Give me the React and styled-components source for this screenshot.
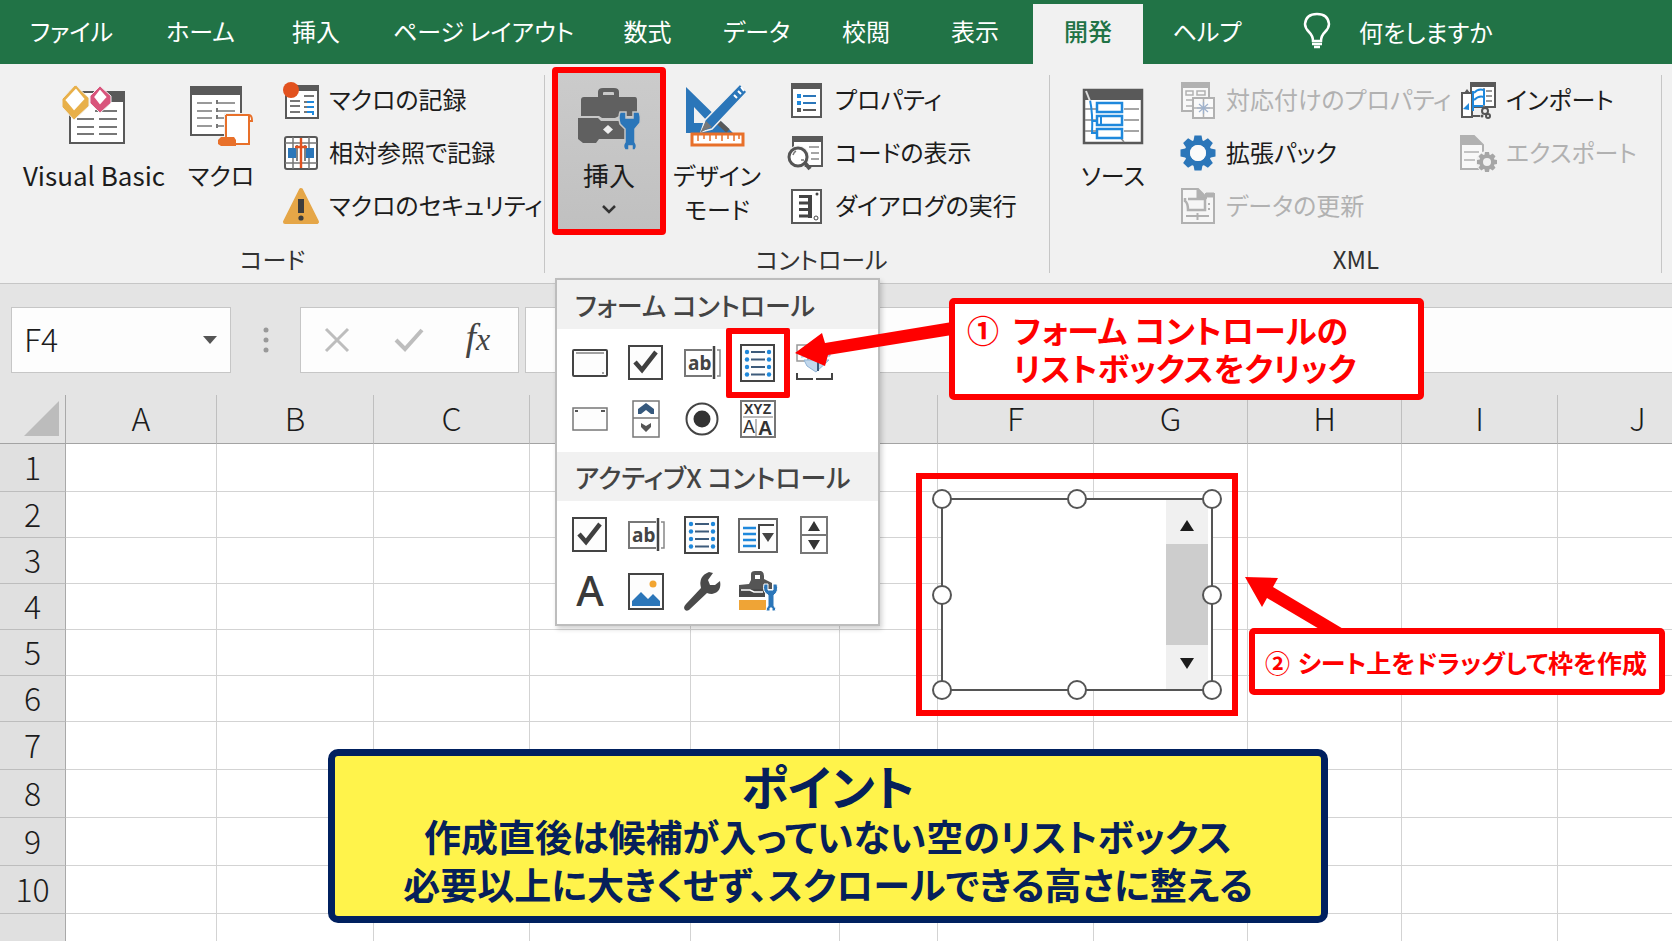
import React from 'react'
import styled, { createGlobalStyle } from 'styled-components'

const color = {
    green: '#217346',
    ribbon: '#f1f1f1',
    bar: '#e4e4e4',
    line: '#c6c6c6',
    ink: '#1c1c1c',
    grey: '#595959',
    faded: '#b1b1b1',
    blue: '#2b76b9',
    bright: '#1e88dc',
    orange: '#e8702a',
    red: '#ff0000',
    navy: '#00205f',
}

const tabs = [
    { name: 'ファイル', width: 135 },
    { name: 'ホーム', width: 123 },
    { name: '挿入', width: 108 },
    { name: 'ページ レイアウト', width: 227 },
    { name: '数式', width: 101 },
    { name: 'データ', width: 117 },
    { name: '校閲', width: 102 },
    { name: '表示', width: 116 },
    { name: '開発', width: 110, active: true },
    { name: 'ヘルプ', width: 128 },
]

const columns = [
    ['A', 151], ['B', 157], ['C', 156], ['D', 161], ['E', 149], ['', 98],
    ['F', 156], ['G', 154], ['H', 154], ['I', 156], ['J', 160],
]

const rows = [48, 46, 46, 46, 46, 46, 48, 48, 48, 48, 48]

/* ---------- icons ---------- */

const Gear = ({ x, y, r, hole, fill }) => (
    <g fill={fill} transform={`translate(${x} ${y})`}>
        {[0, 45, 90, 135, 180, 225, 270, 315].map(a => (
            <path key={a} transform={`rotate(${a})`} d={`M${-r * 0.2} ${-r}H${r * 0.2}L${r * 0.28} ${-r * 0.6}H${-r * 0.28}Z`} />
        ))}
        <circle r={(r * 0.76 + hole) / 2} fill="none" stroke={fill} strokeWidth={r * 0.76 - hole} />
    </g>
)

const VisualBasicIcon = () => (
    <svg width="66" height="62" viewBox="0 0 66 62" aria-hidden="true">
        <path d="M9 8H63V59H9Z" fill="#fff" stroke={color.grey} strokeWidth="2" />
        <path d="M46 7H64V18H46Z" fill={color.grey} />
        <path d="M34 27H56M16 35H33M38 35H56M16 43H33M38 43H56M16 50H33M38 50H56" stroke="#777" strokeWidth="2" />
        <path d="M14 1L28 14V22L13 36L1 23V15Z" fill="#e8b04a" stroke="#f1f1f1" strokeWidth="1" />
        <path d="M15 3L25 15L13 28L3 16Z" fill="#fff" stroke="#e8b04a" strokeWidth="2" />
        <path d="M39 2L50 12V19L39 29L29 19V12Z" fill="#d9557c" stroke="#f1f1f1" strokeWidth="1" />
        <path d="M39 4L47 13L39 22L32 13Z" fill="#fff" stroke="#d9557c" strokeWidth="2" />
    </svg>
)

const MacroIcon = () => (
    <svg width="64" height="66" viewBox="0 0 64 66" aria-hidden="true">
        <path d="M2 5H52V53H2Z" fill="#fff" stroke={color.grey} strokeWidth="2" />
        <path d="M1 4H53V13H1Z" fill={color.grey} />
        <path d="M8 21H23M28 21H46M8 29H23M28 29H46M8 36H23M28 36H36M8 44H23M28 44H36" stroke="#999" strokeWidth="2" />
        <path d="M28 18V22M28 26V30M28 33V37M28 42V46" stroke="#777" strokeWidth="2" />
        <path d="M37 33H58V62H37Z" fill="#fff" stroke="#f1f1f1" strokeWidth="4" />
        <path d="M37 33H60Q63 33 63 39H60V37M60 33V62H37V33" fill="#fff" stroke={color.orange} strokeWidth="2" />
        <path d="M32 55H45L47 58V64H32L29 62V58Z" fill={color.orange} />
    </svg>
)

const RecordIcon = () => (
    <svg width="36" height="38" viewBox="0 0 36 38" aria-hidden="true">
        <path d="M3 5H35V37H3Z" fill="#fff" stroke={color.grey} strokeWidth="2" />
        <path d="M14 4H36V10H14Z" fill={color.grey} />
        <path d="M7 20H17M21 15H31M7 25H17M7 31H17M21 21H24M21 26H24M21 31H24" stroke="#777" strokeWidth="2" />
        <path d="M24 21H31M24 26H31M24 31H30V34" fill="none" stroke={color.bright} strokeWidth="2" />
        <circle cx="8" cy="9" r="8" fill="#e2521f" />
    </svg>
)

const RelativeIcon = () => (
    <svg width="36" height="36" viewBox="0 0 36 36" aria-hidden="true">
        <rect x="2" y="2" width="32" height="32" rx="2" fill="#fff" stroke={color.grey} strokeWidth="2" />
        <path d="M10 2V34M26 2V34M2 8H34M2 28H34" stroke="#777" strokeWidth="1.5" />
        <path d="M5 13H13V23H5ZM23 13H31V23H23Z" fill={color.blue} />
        <path d="M14 10V26M22 10V26" stroke={color.grey} strokeWidth="1.5" />
        <path d="M18 3V33M12 12H24" stroke="#e2521f" strokeWidth="2.4" />
    </svg>
)

const WarningIcon = () => (
    <svg width="36" height="38" viewBox="0 0 36 38" aria-hidden="true">
        <path d="M18 3L34 35H2Z" fill="#e5a647" stroke="#e5a647" strokeWidth="4" strokeLinejoin="round" />
        <path d="M15 12H21V26H15Z" fill="#3c3c3c" />
        <circle cx="18" cy="31" r="2.6" fill="#3c3c3c" />
    </svg>
)

const ToolboxIcon = () => (
    <svg width="64" height="70" viewBox="0 -6 64 70" aria-hidden="true">
        <path fillRule="evenodd" d="M21 11V6Q21 2 26 2H37Q42 2 42 6V11H58Q60 11 60 14V30H42L38 32H25L22 30H4V14Q4 11 7 11ZM26 7V9H37V7Q37 6 36 6H27Q26 6 26 7Z" fill="#606060" />
        <path d="M1 32H21L24 35H48V53H22L19 57H6L1 53Z" fill="#606060" />
        <path d="M31 39L36 43.500L31 48L26 43.500Z" fill="#eee" />
        <path d="M43 26H49V32H56V26H62Q64 30 63 37L58 43V56Q61 60 58 64H55V60H52V64H48Q45 60 48 56V43L43 38Q41 31 43 26Z" fill={color.blue} stroke="#c6c6c6" strokeWidth="1.5" />
    </svg>
)

const DesignIcon = () => (
    <svg width="64" height="64" viewBox="0 0 64 64" aria-hidden="true">
        <path fillRule="evenodd" d="M1 4L48 50H1ZM9 24V40H24Z" fill={color.blue} />
        <path d="M30 36L43 48" stroke={color.grey} strokeWidth="5" />
        <path d="M55 1L62 9L27 46L16 49L20 37Z" fill={color.blue} stroke="#f1f1f1" strokeWidth="1.500" />
        <path d="M21 38L27 44L20 47L15 50Z" fill="#777" />
        <path d="M49 12L52 15M53 8L56 11M56 4L59 8" stroke="#fff" strokeWidth="2" />
        <path d="M7 51H58V62H7Z" fill="#fff" stroke={color.orange} strokeWidth="3" />
        <path d="M13 52V58M19 52V56M25 52V58M31 52V56M37 52V58M43 52V56M49 52V58M54 52V56" stroke={color.orange} strokeWidth="1.500" />
    </svg>
)

const PropertiesIcon = () => (
    <svg width="36" height="38" viewBox="0 0 36 38" aria-hidden="true">
        <path d="M3 3H32V36H3Z" fill="#fff" stroke={color.grey} strokeWidth="2" />
        <path d="M2 2H33V8H2Z" fill={color.grey} />
        <path d="M8 13H12V17H8ZM8 20H12V24H8Z" fill={color.bright} />
        <path d="M8 27H12V31H8Z" fill={color.grey} />
        <path d="M14 15H27M14 22H27" stroke={color.blue} strokeWidth="2" />
        <path d="M14 29H27" stroke={color.grey} strokeWidth="2" />
    </svg>
)

const CodeIcon = () => (
    <svg width="36" height="36" viewBox="0 0 36 36" aria-hidden="true">
        <path d="M4 2H33V31H4Z" fill="#fff" stroke={color.grey} strokeWidth="2" />
        <path d="M3 1H34V7H3Z" fill={color.grey} />
        <path d="M20 12H30M22 18H30M22 24H30" stroke="#888" strokeWidth="1.500" />
        <circle cx="9" cy="22" r="11.500" fill="#f1f1f1" />
        <circle cx="9" cy="22" r="9" fill="#fff" stroke="#555" strokeWidth="3" />
        <path d="M16 28L21 34" stroke="#555" strokeWidth="4" />
        <path d="M4 20Q5 17 7 16M12 25H15" fill="none" stroke="#777" strokeWidth="1.500" />
    </svg>
)

const DialogIcon = () => (
    <svg width="36" height="38" viewBox="0 0 36 38" aria-hidden="true">
        <path d="M3 3H32V36H3Z" fill="#fff" stroke={color.grey} strokeWidth="2" />
        <path d="M10 9.500H21M10 16H21M10 22.500H21M10 29H21" fill="none" stroke="#444" strokeWidth="3" />
        <path d="M21 8V31" stroke="#444" strokeWidth="4" />
        <circle cx="28" cy="7" r="1.500" fill="#444" />
        <circle cx="27" cy="31" r="2" fill="none" stroke="#444" />
    </svg>
)

const SourceIcon = () => (
    <svg width="62" height="60" viewBox="0 0 62 60" aria-hidden="true">
        <path d="M2 5H60V58H2Z" fill="#fff" stroke={color.grey} strokeWidth="2.500" />
        <path d="M1 4H61V15H1Z" fill={color.grey} />
        <path d="M3 24H14M3 35H14M3 46H14M42 24H57M42 35H57M42 46H57M38 52L42 57" stroke="#888" strokeWidth="1.500" />
        <path d="M15 18H40V27H15ZM15 31H40V40H15ZM15 44H40V53H15Z" fill="#fff" stroke={color.bright} strokeWidth="2.500" />
        <path d="M8 15Q11 29 10 48H14M10 36H14M19 32V39" fill="none" stroke={color.bright} strokeWidth="2" />
        <path d="M4 6L8 16" stroke="#ddd" strokeWidth="2" />
    </svg>
)

const MapIcon = () => (
    <svg width="36" height="38" viewBox="0 0 36 38" aria-hidden="true">
        <path d="M2 2H29V30H2Z" fill="#f8f8f8" stroke={color.faded} strokeWidth="2" />
        <path d="M1 1H30V7H1Z" fill={color.faded} />
        <path d="M6 10H13V14H6ZM17 10H25V14H17ZM6 19H12M6 25H12" fill="none" stroke={color.faded} strokeWidth="1.500" />
        <path d="M13 17H34V37H13Z" fill="#fafafa" stroke={color.faded} strokeWidth="2" />
        <path d="M23.500 17V37M13 27H34" stroke={color.faded} strokeWidth="1.500" />
        <path d="M19 23L28 31M28 23L19 31M17 27H30M23.500 21V33" stroke="#9fb2cd" strokeWidth="1.200" />
    </svg>
)

const PackIcon = () => (
    <svg width="36" height="36" viewBox="0 0 36 36" aria-hidden="true">
        <Gear x={18} y={18} r={17.5} hole={8} fill={color.blue} />
        <circle cx="18" cy="18" r="8" fill="#fafafa" />
    </svg>
)

const RefreshIcon = () => (
    <svg width="36" height="38" viewBox="0 0 36 38" aria-hidden="true">
        <path d="M2 2H18L26 10V7H34V36H2Z" fill="#f6f6f6" stroke={color.faded} strokeWidth="2" />
        <path d="M17 2L26 11H17ZM26 6H34V10H26Z" fill={color.faded} stroke={color.faded} />
        <path d="M5 11V14Q8 16 8 23H25V12H8" fill="none" stroke={color.faded} strokeWidth="2.500" />
        <path d="M6 29H29M17.500 26V33M29 16V18M29 21V23" stroke={color.faded} strokeWidth="2" />
    </svg>
)

const ImportIcon = () => (
    <svg width="36" height="38" viewBox="0 0 36 38" aria-hidden="true">
        <path d="M11 3H35V26H11Z" fill="#fff" stroke={color.grey} strokeWidth="2" />
        <path d="M10 1H36V6H10Z" fill={color.grey} />
        <path d="M26 10H32M26 15H32M26 20H32M24 7V26" stroke="#777" strokeWidth="1.500" />
        <path d="M2 12H12V36H2Z" fill="#fff" stroke={color.grey} strokeWidth="2" />
        <path d="M4 12L7 8L10 12Z" fill={color.grey} />
        <path d="M12 35H20" fill="none" stroke={color.grey} strokeWidth="2" />
        <path d="M14 12Q18 7 24 9V24M14 19Q19 14 24 16M14 25H23M13 10V30" fill="none" stroke={color.bright} strokeWidth="2" />
        <path d="M3 28L9 22V29Z" fill={color.bright} />
        <circle cx="25" cy="30" r="3" fill="none" stroke="#555" strokeWidth="2" />
        <circle cx="28" cy="35" r="2" fill="none" stroke="#555" strokeWidth="2" />
        <circle cx="22" cy="35" r="1.500" fill="#555" />
    </svg>
)

const ExportIcon = () => (
    <svg width="38" height="38" viewBox="0 0 38 38" aria-hidden="true">
        <path d="M2 2H15L24 11V35H2Z" fill="#f8f8f8" stroke={color.faded} strokeWidth="2" />
        <path d="M2 2H15V11H2Z" fill={color.faded} />
        <path d="M15 2V11H24Z" fill={color.faded} />
        <path d="M5 18H20M5 26H16" stroke={color.faded} strokeWidth="1.500" />
        <circle cx="28" cy="28" r="11" fill="#f1f1f1" />
        <Gear x={28} y={28} r={10} hole={4} fill="#a6a6a6" />
    </svg>
)

const BulbIcon = () => (
    <svg width="28" height="38" viewBox="0 0 28 38" aria-hidden="true">
        <path d="M10 29Q10 24 6 20Q2 16 2 12Q3 2 14 2Q25 2 26 12Q26 16 22 20Q18 24 18 29Z" fill="none" stroke="#fff" strokeWidth="2.500" />
        <path d="M9 32H19M11 35H17" stroke="#fff" strokeWidth="2.500" />
    </svg>
)

const Box = ({ w = 36, h = 38, children }) => (
    <svg width={w} height={h} viewBox={`0 0 ${w} ${h}`} fill="none" stroke="#444" strokeWidth="2" aria-hidden="true">{children}</svg>
)

const ButtonControl = () => (
    <Box>
        <rect x="1" y="6" width="34" height="26" rx="1" fill="#fdfdfd" />
        <path d="M4 9H32M30 29H32" strokeWidth="1" />
    </Box>
)

const CheckControl = () => (
    <Box>
        <rect x="1" y="2" width="33" height="33" fill="#fdfdfd" />
        <path d="M7 18L14 26L28 8" stroke="#3f3f3f" strokeWidth="4.500" />
    </Box>
)

const TextControl = () => (
    <Box>
        <path d="M28 6H1V32H28" stroke="#777" />
        <path d="M30 2V35" strokeWidth="2.500" />
        <path d="M33 6H36V32H33" stroke="#888" strokeWidth="1.500" />
        <text x="4" y="26" fontSize="19" fontWeight="700" fontFamily="Noto Sans" fill="#444" stroke="none">ab</text>
    </Box>
)

const ListControl = () => (
    <Box>
        <rect x="1" y="1" width="33" height="36" fill="#fdfdfd" />
        <path d="M11 8H25M11 15.500H25M11 23H25M11 30.500H25" stroke="#3c5a7a" />
        {[8, 15.5, 23, 30.5].map(y => (
            <g key={y} fill={color.bright} stroke="none">
                <circle cx="7" cy={y} r="2.2" />
                <circle cx="29" cy={y} r="2.2" />
            </g>
        ))}
    </Box>
)

const ComboControl = () => (
    <Box>
        <path d="M1 1H12V17H1Z" stroke="#999" strokeWidth="1.500" />
        <path d="M5 13L14 12H34V8M8 16H33L20 28L11 22Z" fill="#c3d8ec" stroke="#8fb3d6" strokeWidth="1" />
        <path d="M22 14V27" stroke="#3c5a7a" />
        <path d="M1 29V35H17M20 35H36V29" />
    </Box>
)

const GroupControl = () => (
    <Box>
        <rect x="1" y="8" width="34" height="22" fill="#fdfdfd" stroke="#777" strokeWidth="1.500" />
        <path d="M3 11H6M29 11H33" stroke="#555" />
    </Box>
)

const SpinControl = () => (
    <Box w={28}>
        <path d="M1 1H27V37H1ZM1 18H27" stroke="#777" strokeWidth="1.500" />
        <path d="M6 14V9L14 3L22 9V14H19L14 10L9 14Z" fill="#36597d" stroke="none" />
        <path d="M9 23L14 26L19 23V27L14 32L9 27Z" fill="#555" stroke="none" />
    </Box>
)

const RadioControl = () => (
    <Box>
        <circle cx="18" cy="19" r="15.500" />
        <circle cx="18" cy="19" r="8.500" fill="#333" stroke="none" />
    </Box>
)

const LabelControl = () => (
    <Box>
        <path d="M1 1H35V37H1Z" stroke="#777" />
        <path d="M3 17H33M16 19V36" stroke="#777" strokeWidth="1" />
        <g fontFamily="Liberation Sans" fill="#333" stroke="none">
            <text x="4" y="14" fontSize="14" fontWeight="700">XYZ</text>
            <text x="3" y="33" fontSize="18">A</text>
            <text x="18" y="35" fontSize="20" fontWeight="700">A</text>
        </g>
    </Box>
)

const DropControl = () => (
    <Box w={40}>
        <rect x="1" y="3" width="38" height="33" fill="#fdfdfd" stroke="#666" />
        <path d="M5 12H18M5 18H18M5 24H18M5 30H18" stroke={color.bright} strokeWidth="2.500" />
        <path d="M21 33V9H36" />
        <path d="M24 17H36L30 26Z" fill="#444" stroke="none" />
    </Box>
)

const ScrollControl = () => (
    <Box w={28}>
        <path d="M1 1H27V37H1ZM1 19H27" stroke="#777" />
        <path d="M14 5L20 15H8ZM14 34L20 24H8Z" fill="#333" stroke="none" />
    </Box>
)

const LetterControl = () => (
    <Box>
        <text x="18" y="34" fontSize="42" fontWeight="500" textAnchor="middle" fontFamily="Noto Sans" fill="#3a3a3a" stroke="none">A</text>
    </Box>
)

const ImageControl = () => (
    <Box>
        <rect x="1" y="2" width="34" height="35" fill="#fdfdfd" />
        <circle cx="25" cy="12" r="3.500" fill="#f2a531" stroke="none" />
        <path d="M4 34V29L13 20L20 27L25 22L32 29V34Z" fill={color.blue} stroke="none" />
    </Box>
)

const WrenchControl = () => (
    <Box w={38}>
        <path d="M30 1L25 8L27 13L32 13L37 9Q39 20 29 22Q26 22 24 21L6 38Q2 40 1 36Q1 34 3 32L18 16Q15 4 26 0Z" fill="#4a4a4a" stroke="none" />
    </Box>
)

const MoreControl = () => (
    <Box w={40} h={40}>
        <path fillRule="evenodd" d="M13 9V3Q13 0 17 0H23Q26 1 26 5V8L34 12V18H1V14L11 13ZM17 4V8H22V4Z" fill="#555" stroke="none" />
        <path d="M1 18H27V26H1Z" fill="#4a4a4a" stroke="none" />
        <path d="M3 19H12L16 21H25" stroke="#fff" strokeWidth="1.500" />
        <path d="M1 29H28V39H1Z" fill="#efa436" stroke="none" />
        <path d="M26 13H30V19H35V13H39Q41 21 36 24V35Q39 38 37 40H34V37H32V40H28Q28 37 30 35V24Q24 21 26 13Z" fill={color.blue} stroke="#fff" strokeWidth="1" />
    </Box>
)

/* ---------- page ---------- */

const RibbonItem = ({ icon, label, disabled }) => (
    <SmallButton disabled={disabled}>
        <SmallSlot>{icon}</SmallSlot>
        <SmallLabel>{label}</SmallLabel>
    </SmallButton>
)

const Tool = ({ label, marked, children }) => (
    <ToolButton aria-label={label} title={label} $marked={marked}>{children}</ToolButton>
)

export default function App() {
    return (
        <>
            <GlobalStyle />
            <Page>
                <TabBar>
                    {tabs.map(tab => (
                        <Tab key={tab.name} $width={tab.width} $active={tab.active}>{tab.name}</Tab>
                    ))}
                    <TellMe><BulbIcon />何をしますか</TellMe>
                </TabBar>

                <Ribbon>
                    <Group $start={19} $gap={12}>
                        <Items>
                            <BigButton $width={150} $large><BigSlot><VisualBasicIcon /></BigSlot>Visual Basic</BigButton>
                            <BigButton $width={80}><BigSlot><MacroIcon /></BigSlot>マクロ</BigButton>
                            <List $indent={10}>
                                <RibbonItem icon={<RecordIcon />} label="マクロの記録" />
                                <RibbonItem icon={<RelativeIcon />} label="相対参照で記録" />
                                <RibbonItem icon={<WarningIcon />} label="マクロのセキュリティ" />
                            </List>
                        </Items>
                        <GroupName>コード</GroupName>
                    </Group>

                    <Group $start={7} $gap={6}>
                        <Items>
                            <InsertButton $width={114} $large aria-expanded="true">
                                <BigSlot><ToolboxIcon /></BigSlot>
                                挿入
                                <Chevron>
                                    <svg width="16" height="10" viewBox="0 0 16 10" aria-hidden="true">
                                        <path d="M2 2L8 8L14 2" fill="none" stroke="#333" strokeWidth="2.500" />
                                    </svg>
                                </Chevron>
                            </InsertButton>
                            <BigButton $width={90}><BigSlot><DesignIcon /></BigSlot>デザイン<br />モード</BigButton>
                            <List $indent={21}>
                                <RibbonItem icon={<PropertiesIcon />} label="プロパティ" />
                                <RibbonItem icon={<CodeIcon />} label="コードの表示" />
                                <RibbonItem icon={<DialogIcon />} label="ダイアログの実行" />
                            </List>
                        </Items>
                        <GroupName $inset={48}>コントロール</GroupName>
                        <Menu>
                            <MenuTitle>フォーム コントロール</MenuTitle>
                            <Tools>
                                <Tool label="ボタン"><ButtonControl /></Tool>
                                <Tool label="チェック ボックス"><CheckControl /></Tool>
                                <Tool label="テキスト フィールド"><TextControl /></Tool>
                                <Tool label="リスト ボックス" marked><ListControl /></Tool>
                                <Tool label="コンボ ボックス"><ComboControl /></Tool>
                                <Tool label="グループ ボックス"><GroupControl /></Tool>
                                <Tool label="スピン ボタン"><SpinControl /></Tool>
                                <Tool label="オプション ボタン"><RadioControl /></Tool>
                                <Tool label="ラベル"><LabelControl /></Tool>
                            </Tools>
                            <MenuTitle>アクティブX コントロール</MenuTitle>
                            <Tools>
                                <Tool label="チェック ボックス"><CheckControl /></Tool>
                                <Tool label="テキスト ボックス"><TextControl /></Tool>
                                <Tool label="リスト ボックス"><ListControl /></Tool>
                                <Tool label="コンボ ボックス"><DropControl /></Tool>
                                <Tool label="スクロール バー"><ScrollControl /></Tool>
                                <Tool label="ラベル"><LetterControl /></Tool>
                                <Tool label="イメージ"><ImageControl /></Tool>
                                <Tool label="プロパティ"><WrenchControl /></Tool>
                                <Tool label="コントロールの選択"><MoreControl /></Tool>
                            </Tools>
                        </Menu>
                    </Group>

                    <Group $start={25} $gap={12}>
                        <Items>
                            <BigButton $width={76}><BigSlot><SourceIcon /></BigSlot>ソース</BigButton>
                            <List $indent={17} $width={285}>
                                <RibbonItem icon={<MapIcon />} label="対応付けのプロパティ" disabled />
                                <RibbonItem icon={<PackIcon />} label="拡張パック" />
                                <RibbonItem icon={<RefreshIcon />} label="データの更新" disabled />
                            </List>
                            <List>
                                <RibbonItem icon={<ImportIcon />} label="インポート" />
                                <RibbonItem icon={<ExportIcon />} label="エクスポート" disabled />
                            </List>
                        </Items>
                        <GroupName>XML</GroupName>
                    </Group>
                </Ribbon>

                <FormulaBar>
                    <NameBox>
                        <NameInput aria-label="名前ボックス" defaultValue="F4" />
                        <NameArrow aria-label="名前の一覧">
                            <svg width="14" height="9" viewBox="0 0 14 9" aria-hidden="true"><path d="M0 0H14L7 8Z" fill="#555" /></svg>
                        </NameArrow>
                    </NameBox>
                    <Dots>
                        <svg width="6" height="26" viewBox="0 0 6 26" fill="#999" aria-hidden="true">
                            <circle cx="3" cy="3" r="2.500" /><circle cx="3" cy="13" r="2.500" /><circle cx="3" cy="23" r="2.500" />
                        </svg>
                    </Dots>
                    <FormulaButtons>
                        <FormulaButton aria-label="キャンセル">
                            <svg width="26" height="26" viewBox="0 0 26 26" aria-hidden="true"><path d="M2 2L24 24M24 2L2 24" stroke="#bdbdbd" strokeWidth="3" /></svg>
                        </FormulaButton>
                        <FormulaButton aria-label="入力">
                            <svg width="30" height="26" viewBox="0 0 30 26" aria-hidden="true"><path d="M2 13L11 22L28 3" fill="none" stroke="#bdbdbd" strokeWidth="4" /></svg>
                        </FormulaButton>
                        <FormulaButton aria-label="関数の挿入"><Fx>f<small>x</small></Fx></FormulaButton>
                    </FormulaButtons>
                    <FormulaInput aria-label="数式バー" />
                </FormulaBar>

                <Sheet>
                    <Grid>
                        <colgroup>
                            <HeadCol />
                            {columns.map(([name, width]) => <Col key={name + width} $width={width} />)}
                        </colgroup>
                        <thead>
                            <tr>
                                <Corner>
                                    <svg width="36" height="36" viewBox="0 0 36 36" aria-hidden="true"><path d="M35 0V35H0Z" fill="#bcbcbc" /></svg>
                                </Corner>
                                {columns.map(([name, width]) => <ColHead key={name + width} scope="col">{name}</ColHead>)}
                            </tr>
                        </thead>
                        <tbody>
                            {rows.map((height, i) => (
                                <Row key={i} $height={height}>
                                    <RowHead scope="row">{i < 10 ? i + 1 : ''}</RowHead>
                                    {columns.map(([name, width]) => <Cell key={name + width} />)}
                                </Row>
                            ))}
                        </tbody>
                    </Grid>
                </Sheet>

                <ListFrame>
                    <ListBox role="listbox" aria-label="リスト ボックス">
                        <ScrollBar>
                            <ScrollEnd><svg width="14" height="11" viewBox="0 0 14 11" aria-hidden="true"><path d="M7 0L14 11H0Z" fill="#1c1c1c" /></svg></ScrollEnd>
                            <ScrollThumb />
                            <ScrollEnd><svg width="14" height="11" viewBox="0 0 14 11" aria-hidden="true"><path d="M0 0H14L7 11Z" fill="#1c1c1c" /></svg></ScrollEnd>
                        </ScrollBar>
                        {[[0, 0], [50, 0], [100, 0], [0, 50], [100, 50], [0, 100], [50, 100], [100, 100]].map(([x, y]) => (
                            <Handle key={`${x}-${y}`} $x={x} $y={y} />
                        ))}
                    </ListBox>
                </ListFrame>

                <Arrows viewBox="0 0 1672 941" aria-hidden="true">
                    <path d="M795 353L822 333L825 343L952 322V335L828 355L825 366Z" />
                    <path d="M1245 577L1278 578L1273 587L1345 630H1321L1267 598L1262 607Z" />
                </Arrows>

                <FirstStep>
                    <span>①</span>
                    <span>フォーム コントロールの<br />リストボックスをクリック</span>
                </FirstStep>
                <SecondStep><span>②</span>シート上をドラッグして枠を作成</SecondStep>

                <Note>
                    <NoteTitle>ポイント</NoteTitle>
                    <NoteText>作成直後は候補が入っていない空のリストボックス</NoteText>
                    <NoteText>必要以上に大きくせず、スクロールできる高さに整える</NoteText>
                </Note>
            </Page>
        </>
    )
}

const GlobalStyle = createGlobalStyle`
    * {
        box-sizing: border-box;
    }
    body {
        margin: 0;
        background: #fff;
    }
    body, button, input {
        font-family: 'Noto Sans CJK JP', 'Noto Sans', sans-serif;
        font-size: 24px;
        color: ${color.ink};
        font-feature-settings: 'palt';
    }
    button {
        padding: 0;
        border: 0;
        background: none;
        white-space: nowrap;
    }
    svg {
        display: block;
        flex: none;
        overflow: visible;
    }
`

const Page = styled.div`
    position: relative;
    display: flex;
    flex-direction: column;
    height: 100vh;
    overflow: hidden;
`

const TabBar = styled.nav`
    display: flex;
    flex: none;
    height: 64px;
    padding: 4px 0 0 4px;
    background: ${color.green};
`

const Tab = styled.button`
    width: ${({ $width }) => $width}px;
    padding-bottom: 8px;
    color: ${({ $active }) => $active ? color.green : '#fff'};
    background: ${({ $active }) => $active ? color.ribbon : 'none'};
    font-weight: ${({ $active }) => $active ? 500 : 400};
`

const TellMe = styled.button`
    display: flex;
    align-items: center;
    gap: 28px;
    padding: 0 0 6px 32px;
    color: #fff;
`

const Ribbon = styled.div`
    display: grid;
    grid-template-columns: 545fr 505fr 612fr 10fr;
    flex: none;
    height: 220px;
    background: ${color.ribbon};
    border-bottom: 1px solid ${color.line};
`

const Items = styled.div`
    display: flex;
    align-items: flex-start;
    height: 172px;
`

const Group = styled.section`
    position: relative;
    min-width: 0;
    padding-top: 10px;
    &::after {
        content: '';
        position: absolute;
        right: 0;
        top: 11px;
        bottom: 10px;
        border-right: 1px solid ${color.line};
    }
    ${Items} {
        padding-left: ${({ $start }) => $start}px;
        gap: ${({ $gap }) => $gap}px;
    }
`

const GroupName = styled.div`
    padding-left: ${({ $inset }) => $inset || 0}px;
    line-height: 26px;
    text-align: center;
    color: #333;
`

const BigButton = styled.button`
    display: block;
    flex: none;
    width: ${({ $width }) => $width}px;
    padding-top: 6px;
    font-size: ${({ $large }) => $large ? 26 : 24}px;
    line-height: 34px;
    text-align: center;
`

const InsertButton = styled(BigButton)`
    margin-top: -7px;
    padding: 7px 0 3px;
    border: 6px solid ${color.red};
    border-radius: 4px;
    background: linear-gradient(#cbcbcb, #c0c0c0);
`

const BigSlot = styled.span`
    display: flex;
    justify-content: center;
    align-items: center;
    height: 70px;
    margin-bottom: 8px;
`

const Chevron = styled.span`
    display: flex;
    justify-content: center;
    align-items: center;
    height: 34px;
`

const List = styled.div`
    flex: none;
    width: ${({ $width }) => $width ? `${$width}px` : 'auto'};
    padding-left: ${({ $indent }) => $indent || 0}px;
`

const SmallButton = styled.button`
    display: flex;
    align-items: center;
    gap: 10px;
    height: 53px;
    &:disabled {
        color: ${color.faded};
    }
`

const SmallSlot = styled.span`
    display: flex;
    justify-content: center;
    width: 36px;
    padding-bottom: 2px;
`

const SmallLabel = styled.span`
    padding-bottom: 4px;
`

const Menu = styled.div`
    position: absolute;
    z-index: 2;
    top: 214px;
    left: 10px;
    width: 325px;
    border: 2px solid #bdbdbd;
    background: #fff;
    box-shadow: 2px 3px 5px rgba(0, 0, 0, 0.18);
`

const MenuTitle = styled.div`
    height: 49px;
    padding-left: 18px;
    font-size: 26px;
    line-height: 50px;
    font-weight: 500;
    color: #444;
    background: #f1f1f1;
`

const Tools = styled.div`
    display: flex;
    flex-wrap: wrap;
    padding: 6px 20px 5px 5px;
`

const ToolButton = styled.button`
    position: relative;
    display: flex;
    justify-content: center;
    align-items: center;
    width: 56px;
    height: 56px;
    &::after {
        content: '';
        position: absolute;
        inset: -7px -4px;
        border: ${({ $marked }) => $marked ? `6px solid ${color.red}` : '0'};
        border-radius: 2px;
    }
`

const FormulaBar = styled.div`
    display: flex;
    flex: none;
    height: 111px;
    padding: 23px 0 22px 11px;
    background: ${color.bar};
`

const NameBox = styled.div`
    display: flex;
    width: 220px;
    border: 1px solid ${color.line};
    background: #fdfdfd;
`

const NameInput = styled.input`
    flex: 1;
    min-width: 0;
    padding: 0 0 4px 12px;
    border: 0;
    background: none;
    font-size: 32px;
    font-weight: 300;
`

const NameArrow = styled.button`
    display: flex;
    justify-content: center;
    align-items: center;
    width: 40px;
`

const Dots = styled.div`
    display: flex;
    justify-content: center;
    align-items: center;
    width: 69px;
`

const FormulaButtons = styled.div`
    display: flex;
    width: 219px;
    margin-right: 6px;
    border: 1px solid ${color.line};
    background: #fdfdfd;
`

const FormulaButton = styled.button`
    display: flex;
    flex: 1;
    justify-content: center;
    align-items: center;
`

const Fx = styled.i`
    padding: 0 8px 4px 0;
    font-family: 'Liberation Serif', serif;
    font-size: 38px;
    line-height: 38px;
    color: #444;
    small {
        font-size: 32px;
    }
`

const FormulaInput = styled.input`
    flex: 1;
    min-width: 0;
    border: 1px solid ${color.line};
    border-right: 0;
    background: #fdfdfd;
`

const Sheet = styled.div`
    flex: 1;
    min-height: 0;
    overflow: hidden;
    background: #fff;
`

const Grid = styled.table`
    width: max(100%, 1718px);
    table-layout: fixed;
    border-spacing: 0;
    font-size: 32px;
    line-height: 40px;
    th, td {
        padding: 0;
        font-weight: 300;
    }
    th {
        padding-bottom: 4px;
    }
`

const HeadCol = styled.col`
    width: 66px;
`

const Col = styled.col`
    width: ${({ $width }) => $width}px;
`

const ColHead = styled.th`
    height: 49px;
    border-right: 1px solid #bfbfbf;
    border-bottom: 1px solid #a3a3a3;
    background: ${color.bar};
`

const Corner = styled.td`
    height: 49px;
    border-right: 1px solid #a9a9a9;
    border-bottom: 1px solid #a3a3a3;
    background: ${color.bar};
    svg {
        margin-left: 24px;
    }
`

const Row = styled.tr`
    height: ${({ $height }) => $height}px;
`

const RowHead = styled.th`
    border-right: 1px solid #a9a9a9;
    border-bottom: 1px solid #bdbdbd;
    background: #e0e0e0;
`

const Cell = styled.td`
    border-right: 1px solid #d3d3d3;
    border-bottom: 1px solid #d3d3d3;
`

const ListFrame = styled.div`
    position: absolute;
    top: 473px;
    left: 916px;
    width: 322px;
    height: 243px;
    padding: 20px;
    border: 6px solid ${color.red};
`

const ListBox = styled.div`
    position: relative;
    display: flex;
    justify-content: flex-end;
    height: 191px;
    padding-right: 4px;
    outline: 2px solid #555;
    outline-offset: -1px;
    background: #fff;
`

const ScrollBar = styled.div`
    display: flex;
    flex-direction: column;
    width: 42px;
    padding: 8px 0;
    background: #f0f0f0;
`

const ScrollEnd = styled.div`
    display: flex;
    flex: none;
    justify-content: center;
    align-items: center;
    height: 37px;
`

const ScrollThumb = styled.div`
    flex: 1;
    background: #cdcdcd;
`

const Handle = styled.i`
    position: absolute;
    left: ${({ $x }) => $x}%;
    top: ${({ $y }) => $y}%;
    width: 20px;
    height: 20px;
    margin: -10px;
    border: 2px solid #555;
    border-radius: 50%;
    background: #fff;
`

const Arrows = styled.svg`
    position: absolute;
    z-index: 3;
    top: 0;
    left: 0;
    width: 1672px;
    height: 941px;
    fill: ${color.red};
    pointer-events: none;
`

const Step = styled.div`
    position: absolute;
    z-index: 3;
    display: flex;
    border: 6px solid ${color.red};
    border-radius: 5px;
    background: #fff;
    color: ${color.red};
    font-weight: 700;
    white-space: nowrap;
`

const FirstStep = styled(Step)`
    top: 298px;
    left: 949px;
    width: 475px;
    height: 102px;
    padding: 6px 12px;
    gap: 14px;
    font-size: 32px;
    line-height: 38px;
`

const SecondStep = styled(Step)`
    top: 628px;
    left: 1249px;
    width: 416px;
    height: 67px;
    padding-left: 10px;
    gap: 8px;
    font-size: 25px;
    line-height: 56px;
`

const Note = styled.aside`
    position: absolute;
    z-index: 3;
    top: 749px;
    left: 328px;
    right: 344px;
    height: 174px;
    border: 7px solid ${color.navy};
    border-radius: 10px;
    background: #fff34b;
    color: #06205a;
    font-weight: 700;
    text-align: center;
    white-space: nowrap;
`

const NoteTitle = styled.h2`
    margin: 2px 0 0;
    font-size: 48px;
    line-height: 54px;
`

const NoteText = styled.p`
    margin: 0;
    font-size: 37px;
    line-height: 48px;
`
